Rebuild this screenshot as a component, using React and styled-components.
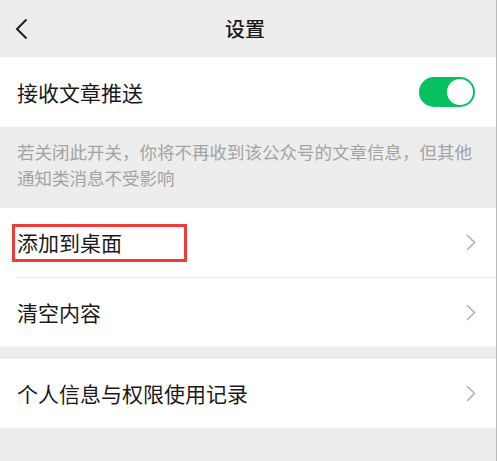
import React from 'react';
import styled, { createGlobalStyle } from 'styled-components';

const GlobalStyle = createGlobalStyle`
  html, body {
    margin: 0;
    padding: 0;
    background: #ffffff;
  }
  body {
    font-family: "Noto Sans CJK SC", "Noto Sans", sans-serif;
  }
`;

const Page = styled.div`
  width: 496px;
  height: 461px;
  background: #ededed;
  border-right: 1px solid #b9bdc5;
  display: flex;
  flex-direction: column;
  overflow: hidden;
`;

const NavBar = styled.header`
  height: 57px;
  display: grid;
  grid-template-columns: 60px 1fr 60px;
  align-items: center;
`;

const BackButton = styled.button`
  border: none;
  background: none;
  padding: 0 0 0 15px;
  height: 57px;
  display: flex;
  align-items: center;
  cursor: pointer;
`;

const Title = styled.h1`
  margin: 0;
  text-align: center;
  font-size: 20px;
  font-weight: 500;
  color: #191919;
  padding-right: 6px;
`;

const Group = styled.section`
  background: #ffffff;
  margin-top: ${p => p.$gap || 0}px;
`;

const Row = styled.div`
  height: ${p => p.$h || 69}px;
  display: flex;
  align-items: center;
  justify-content: space-between;
  padding: 0 20px 0 17px;
  position: relative;
  & + & {
    border-top: 1px solid #e7e7e7;
    margin-left: 17px;
    padding-left: 0;
  }
`;

const Label = styled.span`
  font-size: 21px;
  color: #1a1a1a;
  line-height: 1;
  position: relative;
`;

const Marked = styled(Label)`
  &::after {
    content: '';
    position: absolute;
    left: -5px;
    top: -8px;
    right: -65px;
    bottom: -9px;
    border: 3px solid #f23a3a;
  }
`;

const Note = styled.p`
  margin: 0;
  padding: 12px 20px 17px 17px;
  font-size: 17.5px;
  line-height: 26px;
  color: #a3a3a3;
  height: 81px;
  box-sizing: border-box;
`;

const Switch = styled.div`
  width: 56px;
  height: 30px;
  border-radius: 15px;
  background: #07c160;
  position: relative;
  margin-right: 1px;
  &::after {
    content: '';
    position: absolute;
    top: 2px;
    right: 2px;
    width: 26px;
    height: 26px;
    border-radius: 50%;
    background: #ffffff;
  }
`;

const Back = () => (
  <svg width="13" height="22" viewBox="0 0 13 22">
    <path d="M11.5 1.5 L2 11 L11.5 20.5" fill="none" stroke="#1f1f1f" strokeWidth="2" />
  </svg>
);

const Chevron = () => (
  <svg width="10" height="17" viewBox="0 0 10 17">
    <path d="M1 1 L8.5 8.5 L1 16" fill="none" stroke="#b3b3b3" strokeWidth="1.6" />
  </svg>
);

export default function App() {
  return (
    <>
      <GlobalStyle />
      <Page>
        <NavBar>
          <BackButton><Back /></BackButton>
          <Title>设置</Title>
          <span />
        </NavBar>
        <Group>
          <Row $h={70}>
            <Label>接收文章推送</Label>
            <Switch />
          </Row>
        </Group>
        <Note>若关闭此开关，你将不再收到该公众号的文章信息，但其他通知类消息不受影响</Note>
        <Group>
          <Row>
            <Marked>添加到桌面</Marked>
            <Chevron />
          </Row>
          <Row>
            <Label>清空内容</Label>
            <Chevron />
          </Row>
        </Group>
        <Group $gap={12}>
          <Row>
            <Label>个人信息与权限使用记录</Label>
            <Chevron />
          </Row>
        </Group>
      </Page>
    </>
  );
}
